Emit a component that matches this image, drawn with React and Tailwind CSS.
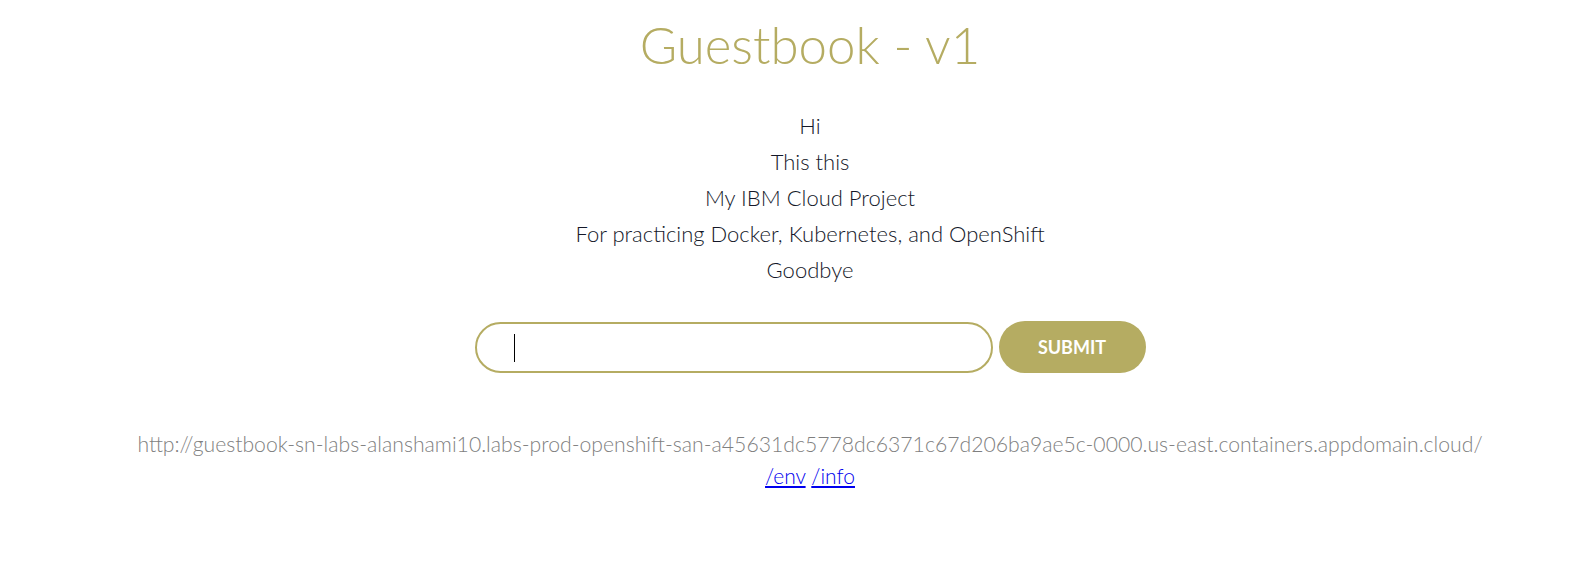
const lines = [
  "Hi",
  "This this",
  "My IBM Cloud Project",
  "For practicing Docker, Kubernetes, and OpenShift",
  "Goodbye",
];

export default function App() {
  return (
    <div
      className="min-h-[565px] bg-white pl-[50px] text-center"
      style={{ fontFamily: '"Lato", "Open Sans", sans-serif' }}
    >
      <h1 className="pt-[12px] text-[51px] leading-[66px] font-light text-[#b5ac62]">
        Guestbook - v1
      </h1>

      <div className="mt-[30px] text-[22px] leading-[36px] font-light text-[#141829]">
        {lines.map((line) => (
          <div key={line}>{line}</div>
        ))}
      </div>

      <form
        className="mt-[33px] flex items-center justify-center gap-[6px]"
        onSubmit={(e) => e.preventDefault()}
      >
        <div className="relative">
          <input
            type="text"
            className="block h-[51px] w-[518px] rounded-full border-2 border-[#b5ac62] px-[38px] text-[20px] outline-none"
          />
          {/* caret */}
          <span className="pointer-events-none absolute left-[39px] top-[12px] h-[28px] w-px bg-black" />
        </div>
        <button
          type="submit"
          className="h-[52px] w-[147px] rounded-full bg-[#b5ac62] text-[18px] font-bold text-white"
        >
          SUBMIT
        </button>
      </form>

      <div className="mt-[55px] text-[21.2px] leading-[32px] font-light text-[#7f7f7f]">
        http://guestbook-sn-labs-alanshami10.labs-prod-openshift-san-a45631dc5778dc6371c67d206ba9ae5c-0000.us-east.containers.appdomain.cloud/
      </div>
      <div className="text-[21px] leading-[32px] font-light">
        <a href="#" className="text-[#0000ee] underline">/env</a>{" "}
        <a href="#" className="text-[#0000ee] underline">/info</a>
      </div>
    </div>
  );
}
